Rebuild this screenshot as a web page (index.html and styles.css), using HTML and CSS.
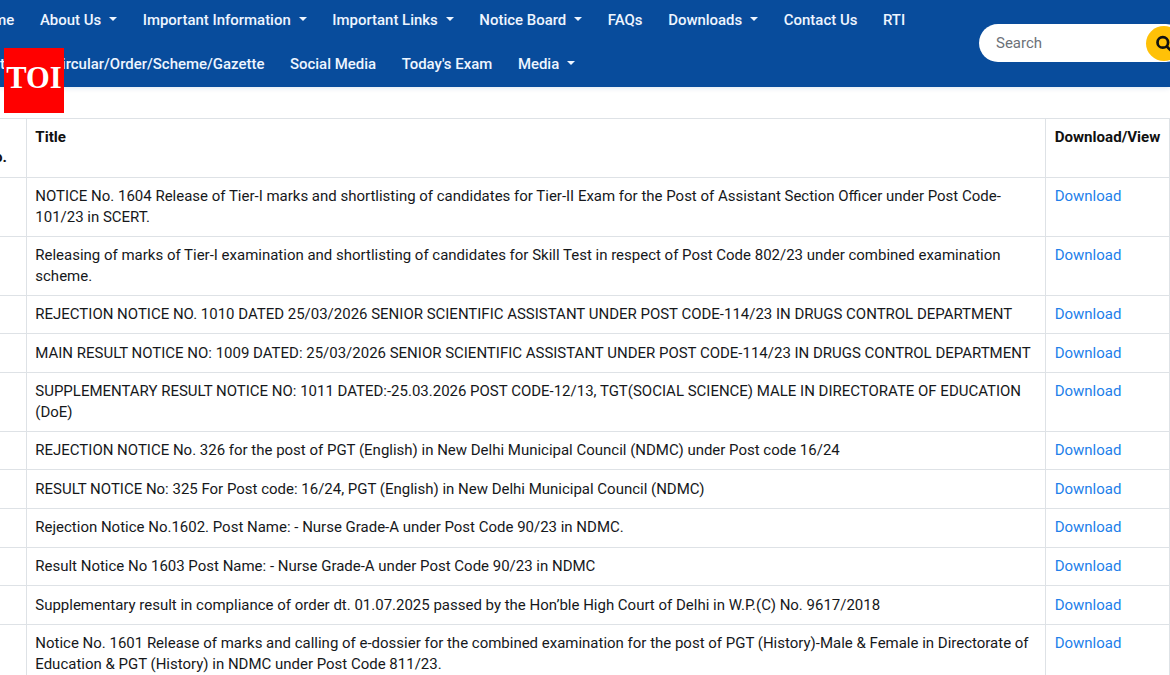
FILE: index.html
```
<!DOCTYPE html>
<html lang="en">
<head>
<meta charset="utf-8">
<title>Notice Board</title>
<link rel="stylesheet" href="styles.css">
</head>
<body>
<header class="header">
  <nav class="nav">
    <div class="nav-row nav-main">
      <a class="home">Home</a><a class="drop">About Us</a><a class="drop">Important Information</a><a class="drop">Important Links</a><a class="drop">Notice Board</a><a>FAQs</a><a class="drop">Downloads</a><a>Contact Us</a><a>RTI</a>
    </div>
    <div class="nav-row nav-sub">
      <a class="cut">t</a><a>Circular/Order/Scheme/Gazette</a><a>Social Media</a><a>Today's Exam</a><a class="drop">Media</a>
    </div>
  </nav>
  <div class="search">
    <span>Search</span>
    <div class="search-button">
      <svg width="18" height="18" viewBox="0 0 18 18" fill="none" stroke="#111" stroke-width="2.7"><circle cx="7.8" cy="8.4" r="5.3"/><path d="M11.6 12.2L17 17.6"/></svg>
    </div>
  </div>
  <div class="logo">TOI</div>
</header>
<main class="notices">
  <div class="row double head"><div class="num"><span>S. No.</span></div><div>Title</div><div>Download/View</div></div>
  <div class="row double"><div></div><div>NOTICE No. 1604 Release of Tier-I marks and shortlisting of candidates for Tier-II Exam for the Post of Assistant Section Officer under Post Code-<br>101/23 in SCERT.</div><div><a>Download</a></div></div>
  <div class="row double"><div></div><div>Releasing of marks of Tier-I examination and shortlisting of candidates for Skill Test in respect of Post Code 802/23 under combined examination<br>scheme.</div><div><a>Download</a></div></div>
  <div class="row"><div></div><div>REJECTION NOTICE NO. 1010 DATED 25/03/2026 SENIOR SCIENTIFIC ASSISTANT UNDER POST CODE-114/23 IN DRUGS CONTROL DEPARTMENT</div><div><a>Download</a></div></div>
  <div class="row"><div></div><div>MAIN RESULT NOTICE NO: 1009 DATED: 25/03/2026 SENIOR SCIENTIFIC ASSISTANT UNDER POST CODE-114/23 IN DRUGS CONTROL DEPARTMENT</div><div><a>Download</a></div></div>
  <div class="row double"><div></div><div>SUPPLEMENTARY RESULT NOTICE NO: 1011 DATED:-25.03.2026 POST CODE-12/13, TGT(SOCIAL SCIENCE) MALE IN DIRECTORATE OF EDUCATION<br>(DoE)</div><div><a>Download</a></div></div>
  <div class="row"><div></div><div>REJECTION NOTICE No. 326 for the post of PGT (English) in New Delhi Municipal Council (NDMC) under Post code 16/24</div><div><a>Download</a></div></div>
  <div class="row"><div></div><div>RESULT NOTICE No: 325 For Post code: 16/24, PGT (English) in New Delhi Municipal Council (NDMC)</div><div><a>Download</a></div></div>
  <div class="row"><div></div><div>Rejection Notice No.1602. Post Name: - Nurse Grade-A under Post Code 90/23 in NDMC.</div><div><a>Download</a></div></div>
  <div class="row"><div></div><div>Result Notice No 1603 Post Name: - Nurse Grade-A under Post Code 90/23 in NDMC</div><div><a>Download</a></div></div>
  <div class="row"><div></div><div>Supplementary result in compliance of order dt. 01.07.2025 passed by the Hon’ble High Court of Delhi in W.P.(C) No. 9617/2018</div><div><a>Download</a></div></div>
  <div class="row double"><div></div><div>Notice No. 1601 Release of marks and calling of e-dossier for the combined examination for the post of PGT (History)-Male &amp; Female in Directorate of<br>Education &amp; PGT (History) in NDMC under Post Code 811/23.</div><div><a>Download</a></div></div>
</main>
</body>
</html>
```
FILE: styles.css
```
* { box-sizing: border-box; }
body {
  margin: 0;
  width: 1170px;
  height: 675px;
  overflow: hidden;
  background: #fff;
  color: #16181b;
  font: 14.99px/20.5px Roboto, sans-serif;
}
.header {
  position: relative;
  display: flex;
  justify-content: space-between;
  height: 87px;
  background: #084c9c;
  box-shadow: 0 1px 5px #084c9c24;
}
.nav { display: flex; flex-direction: column; gap: 23.5px; padding-top: 10.4px; }
.nav-row { display: flex; gap: 25.6px; white-space: nowrap; color: #eef5ff; font-weight: 500; font-size: 14.95px; }
.home { width: 14.3px; display: flex; justify-content: flex-end; }
.cut { width: 4px; margin-right: 22.5px; }
.drop::after {
  content: "";
  display: inline-block;
  margin-left: 8px;
  vertical-align: 4px;
  border: 4.5px solid transparent;
  border-top-color: currentColor;
  border-bottom: 0;
}
.search {
  display: flex;
  align-items: center;
  justify-content: space-between;
  flex: none;
  width: 206px;
  height: 38px;
  margin: 24px -15px 0 0;
  padding: 0 3px 0 17px;
  border-radius: 19px;
  background: #fff;
  color: #6c7178;
}
.search-button {
  display: flex;
  align-items: center;
  justify-content: center;
  width: 36px;
  height: 35px;
  border-radius: 50%;
  background: #ffc107;
}
.logo {
  position: absolute;
  left: 4px;
  top: 48px;
  width: 60px;
  height: 65px;
  background: #f00;
  color: #fff;
  font: bold 30.5px/61px "Liberation Serif", serif;
  text-align: center;
}
.notices { margin-top: 31px; width: 1170px; border-top: 1px solid #dee2e6; }
.row { display: grid; grid-template-columns: 27px 1019px 124px; height: 38.6px; white-space: nowrap; }
.row.double { height: 58.9px; }
.row > div { padding: 8.4px 0 0 8.3px; border-right: 1px solid #dee2e6; border-bottom: 1px solid #dee2e6; }
.row > div:last-child { padding-left: 8.7px; }
.head { font-weight: 700; color: #111; }
.row.head > div { padding-top: 8px; font-size: 15.1px; }
.row.head > .num { display: flex; justify-content: flex-end; align-items: flex-end; padding: 0 19px 9px 0; overflow: hidden; }
.row a { color: #2280ea; }
```
